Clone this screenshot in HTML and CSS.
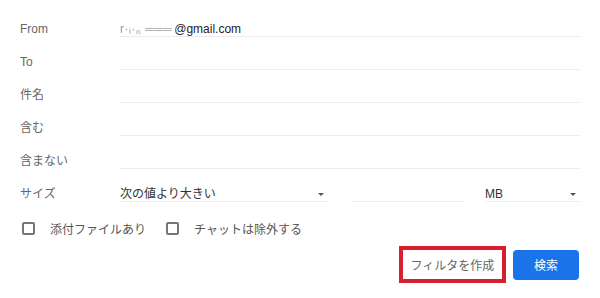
FILE: index.html
```html
<!DOCTYPE html>
<html lang="ja">
<head>
<meta charset="utf-8">
<link rel="stylesheet" href="styles.css">
</head>
<body>
<div class="dialog">
  <div class="row">
    <div class="label">From</div>
    <div class="field"><span class="blur">r·ᵢ·ₙ  ═══</span>@gmail.com</div>
  </div>
  <div class="row">
    <div class="label">To</div>
    <div class="field"></div>
  </div>
  <div class="row">
    <div class="label">件名</div>
    <div class="field"></div>
  </div>
  <div class="row">
    <div class="label">含む</div>
    <div class="field"></div>
  </div>
  <div class="row">
    <div class="label">含まない</div>
    <div class="field"></div>
  </div>
  <div class="row">
    <div class="label">サイズ</div>
    <div class="size">
      <div class="field select sel-op">次の値より大きい<span class="arrow"></span></div>
      <div class="field num"></div>
      <div class="field select sel-unit">MB<span class="arrow"></span></div>
    </div>
  </div>
  <div class="checks">
    <label class="check"><span class="box"></span>添付ファイルあり</label>
    <label class="check"><span class="box"></span>チャットは除外する</label>
  </div>
  <div class="actions">
    <div class="highlight"><button class="btn-text">フィルタを作成</button></div>
    <button class="btn-primary">検索</button>
  </div>
</div>
</body>
</html>
```

FILE: styles.css
```css
* { box-sizing: border-box; }
html, body {
  margin: 0;
  background: #ffffff;
}
body {
  font-family: Arial, "Liberation Sans", "Noto Sans CJK JP", sans-serif;
  font-size: 12px;
  color: #222;
}
.dialog {
  width: 600px;
  padding: 12px 20px 0 20px;
}
.row {
  display: flex;
  height: 33px;
}
.label {
  width: 100px;
  line-height: 35px;
  color: #666;
}
.field {
  flex: 1;
  margin-top: 8px;
  height: 17px;
  line-height: 18px;
  border-bottom: 1px solid #ececec;
  color: #222;
  position: relative;
  white-space: nowrap;
}
.blur {
  color: #999;
  filter: blur(0.6px);
  letter-spacing: 0.5px;
  margin-right: 2px;
}
.size {
  flex: 1;
  display: flex;
}
.sel-op {
  flex: 0 0 208px;
  margin-right: 24px;
  color: #333;
}
.num {
  flex: 0 0 111px;
  margin-right: 22px;
}
.sel-unit {
  flex: 1;
  color: #333;
}
.arrow {
  position: absolute;
  right: 4px;
  top: 8px;
  width: 0;
  height: 0;
  border-left: 3.5px solid transparent;
  border-right: 3.5px solid transparent;
  border-top: 3.5px solid #555;
}
.checks {
  display: flex;
  align-items: center;
  height: 36px;
  padding-top: 1px;
  color: #555;
}
.check {
  display: flex;
  align-items: center;
  margin-right: 18px;
}
.box {
  width: 13px;
  height: 13px;
  border: 2px solid #777;
  border-radius: 2px;
  margin-left: 2px;
  margin-right: 15px;
}
.actions {
  display: flex;
  justify-content: flex-end;
  align-items: center;
  height: 37px;
  padding-right: 1px;
}
.highlight {
  border: 4px solid #d7202f;
  width: 107px;
  height: 37px;
  display: flex;
  align-items: center;
  justify-content: center;
  margin-right: 7px;
}
.btn-text {
  border: none;
  background: #fff;
  font-family: Arial, "Liberation Sans", "Noto Sans CJK JP", sans-serif;
  font-size: 12px;
  color: #666;
  padding: 0;
}
.btn-primary {
  width: 66px;
  height: 30px;
  border: none;
  border-radius: 4px;
  background: #1a73e8;
  color: #fff;
  font-family: Arial, "Liberation Sans", "Noto Sans CJK JP", sans-serif;
  font-size: 12px;
  padding: 0;
}
```
